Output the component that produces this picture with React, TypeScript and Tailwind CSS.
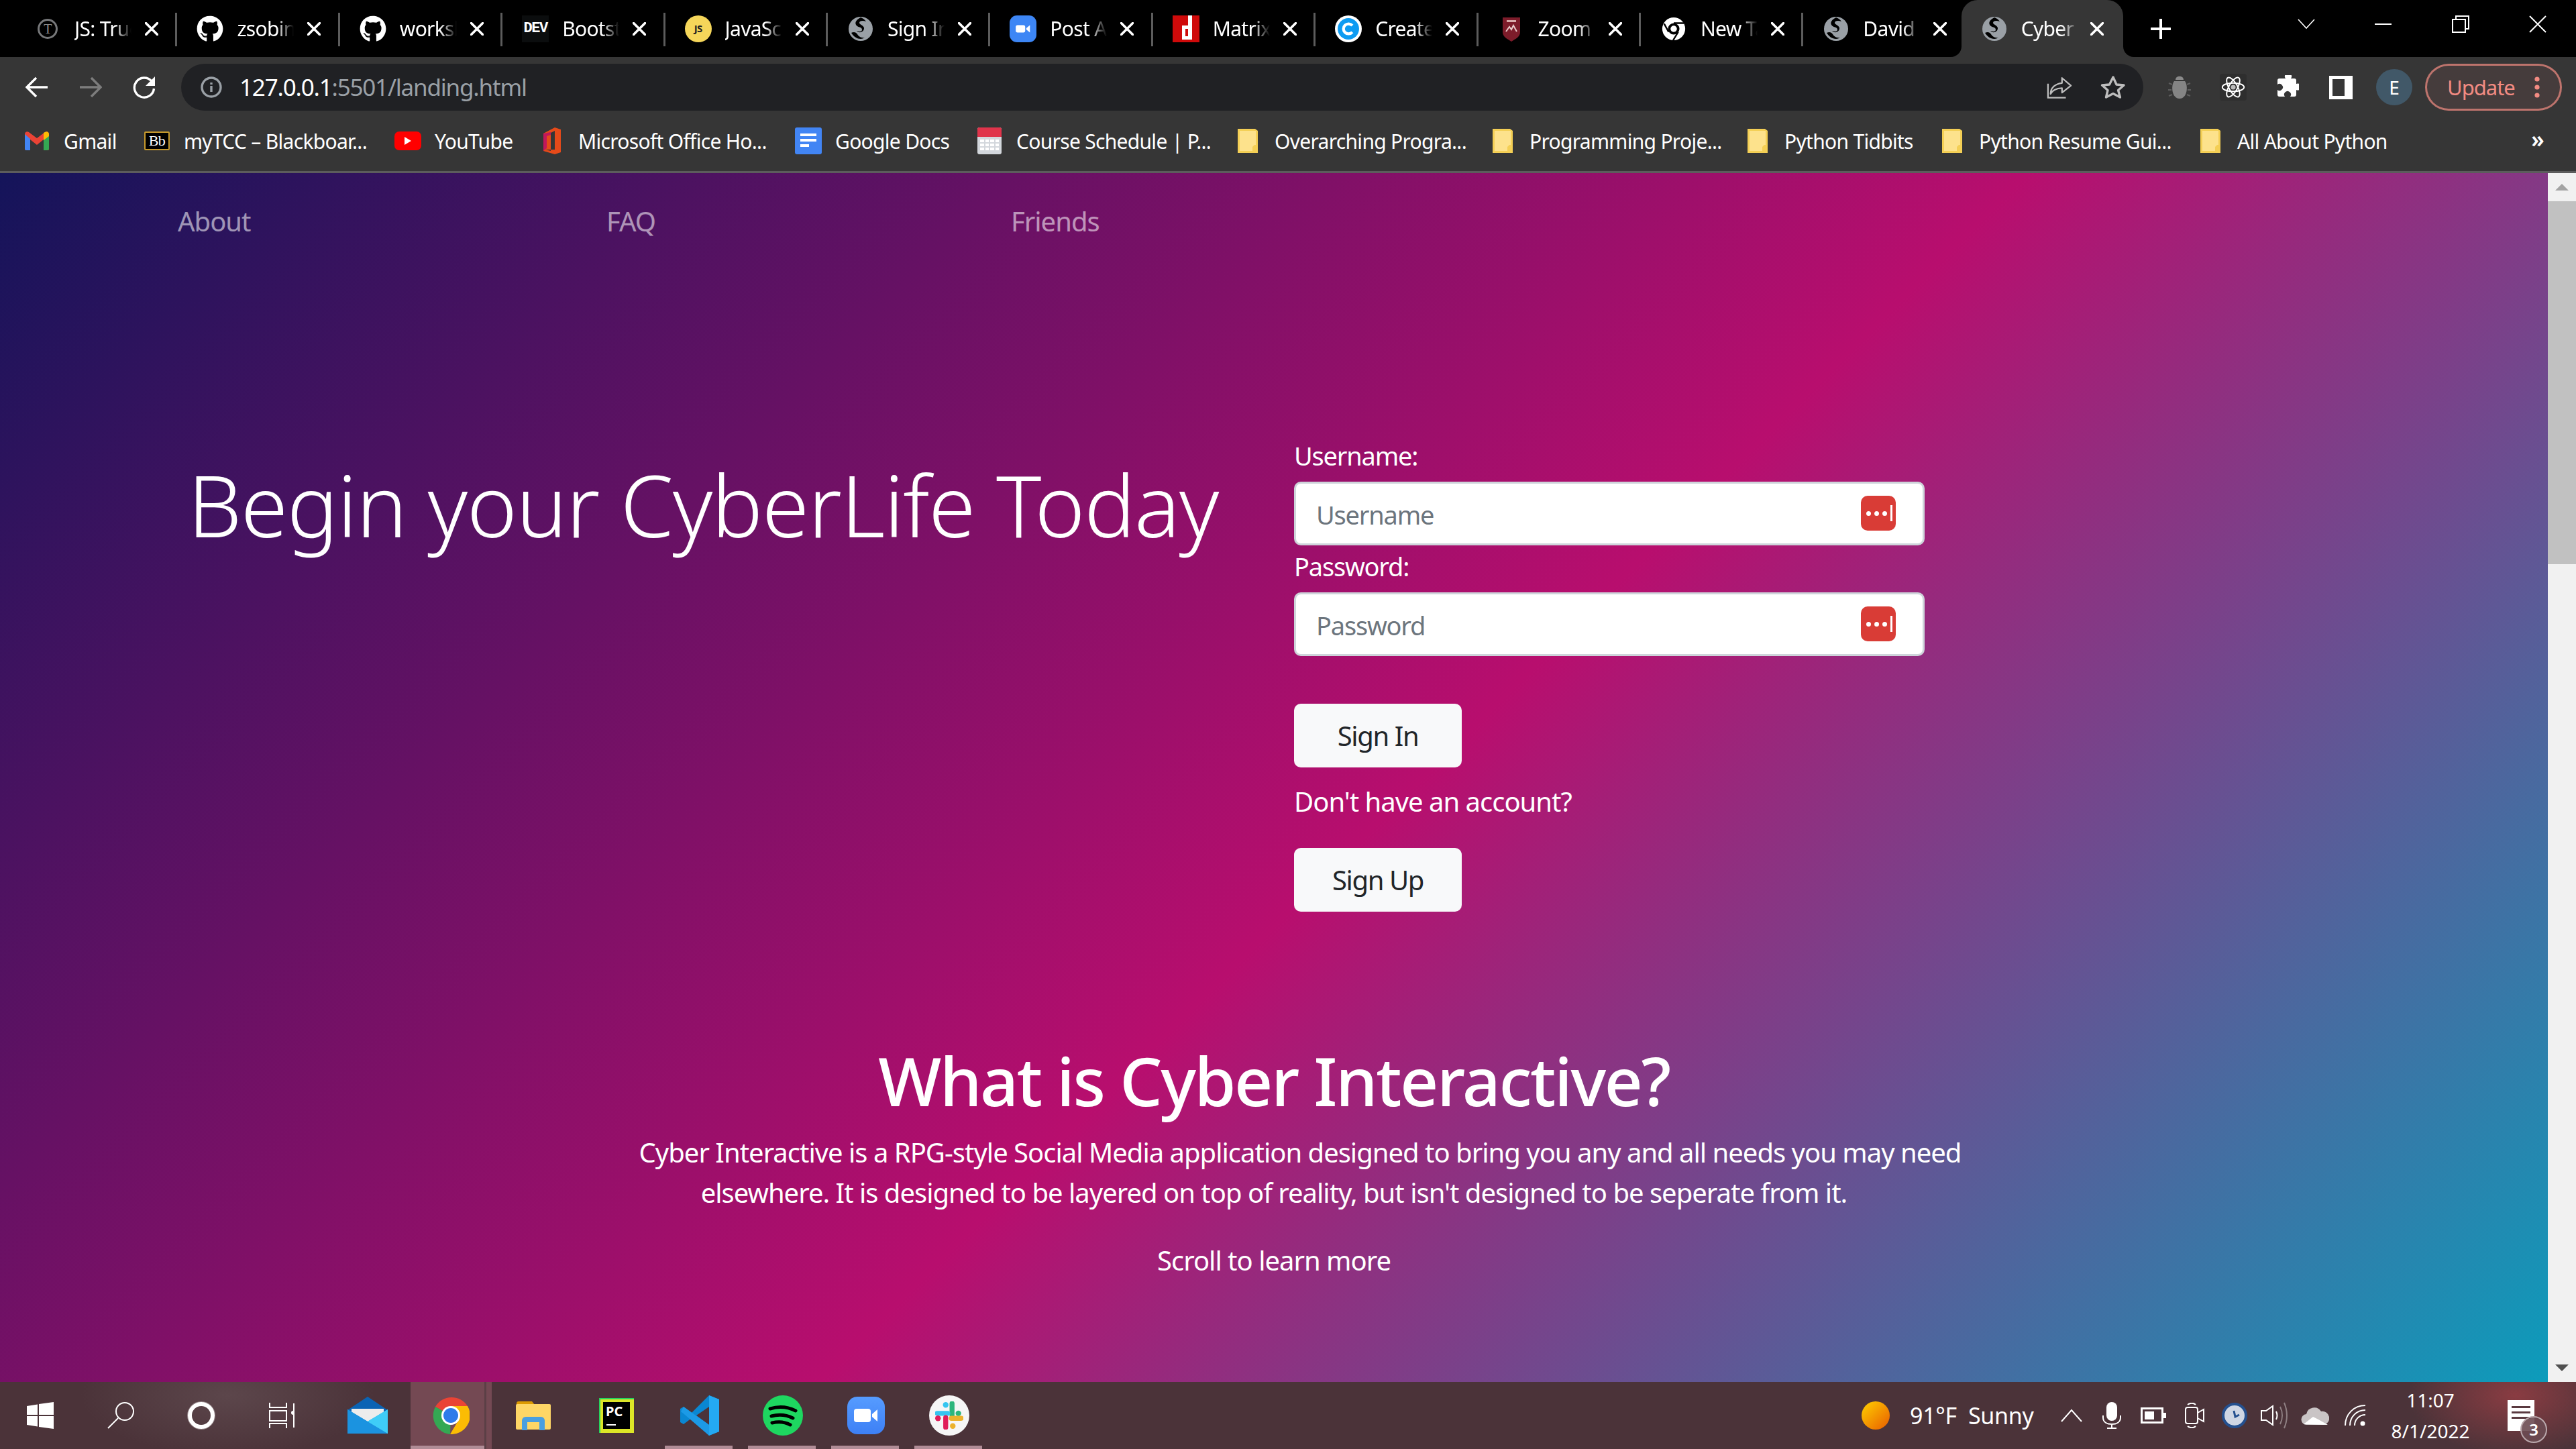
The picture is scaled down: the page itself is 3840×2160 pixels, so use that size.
import React from 'react';
import { FaGithub } from 'react-icons/fa';

function Globe() {
    return (
        <svg viewBox="0 0 40 40" className="w-[40px] h-[40px]">
            <circle cx="20" cy="20" r="18" fill="#9aa0a6" />
            <path d="M20 3c-6 3-9 7-7 11s9 3 9 7-5 3-8 2c4 4 10 2 11-3s-7-6-7-9 5-4 10-2C26 6 23 4 20 3z" fill="#000" />
            <path d="M6 26c3 5 8 9 14 9 2 0 4-1 6-2-6 1-9-2-11-5s-5-4-9-2z" fill="#000" />
        </svg>
    );
}

function MiniChrome() {
    return (
        <svg viewBox="0 0 40 40" className="w-[38px] h-[38px]">
            <circle cx="20" cy="20" r="18" fill="#fff" />
            <circle cx="20" cy="20" r="9" fill="#000" />
            <circle cx="20" cy="20" r="5" fill="#fff" />
            <path d="M20 11h16M12 25L5 12M27 25l-8 13" stroke="#000" strokeWidth="2.5" />
        </svg>
    );
}

const tabs: { title: string; icon: React.ReactNode }[] = [
    {
        title: 'JS: True',
        icon: (
            <div className="w-[30px] h-[30px] rounded-full border-[3px] border-[#77787a] flex items-center justify-center text-[#8a8a8a] text-[20px] leading-none [font-family:'Liberation_Serif',serif]">
                T
            </div>
        ),
    },
    { title: 'zsobin', icon: <FaGithub className="w-[40px] h-[40px] text-white" /> },
    { title: 'worksh', icon: <FaGithub className="w-[40px] h-[40px] text-white" /> },
    {
        title: 'Bootst',
        icon: (
            <div className="w-[40px] h-[40px] bg-[#0b0d0e] flex items-center justify-center text-white text-[22px] font-bold leading-none [font-family:'Liberation_Mono',monospace] tracking-[-1.5px]">
                DEV
            </div>
        ),
    },
    {
        title: 'JavaScr',
        icon: (
            <div className="w-[40px] h-[40px] rounded-full bg-[#f5d65a] flex items-center justify-center text-[#222] text-[15px] font-bold leading-none">
                JS
            </div>
        ),
    },
    { title: 'Sign In', icon: <Globe /> },
    {
        title: 'Post A',
        icon: (
            <div className="w-[40px] h-[40px] rounded-[11px] bg-[#3d86f5] flex items-center justify-center">
                <svg viewBox="0 0 24 24" className="w-[26px] h-[26px]">
                    <rect x="2" y="7" width="13" height="10" rx="2.5" fill="#fff" />
                    <path d="M16.5 11l5-4v10l-5-4z" fill="#fff" />
                </svg>
            </div>
        ),
    },
    {
        title: 'Matrix',
        icon: (
            <div className="w-[40px] h-[40px] bg-[#cf0a0a]">
                <svg viewBox="0 0 40 40" className="w-full h-full">
                    <path d="M23 0h6v36h-15V15h9zM19 20v11h4V20z" fill="#fff" />
                </svg>
            </div>
        ),
    },
    {
        title: 'Create',
        icon: (
            <div className="w-[40px] h-[40px] rounded-full bg-white flex items-center justify-center">
                <svg viewBox="0 0 32 32" className="w-[34px] h-[34px]">
                    <circle cx="16" cy="16" r="15" fill="#0d9bf2" />
                    <path d="M21.5 11.5a7 7 0 1 0 0 9" fill="none" stroke="#fff" strokeWidth="4" />
                </svg>
            </div>
        ),
    },
    {
        title: 'Zoom',
        icon: (
            <svg viewBox="0 0 32 40" className="w-[32px] h-[40px]">
                <path d="M3 3h26v22c0 7-7 10-13 14C10 35 3 32 3 25z" fill="#7d1c2a" />
                <path d="M8 24l5-7 3 4 3-6 5 9" fill="none" stroke="#e8c9c9" strokeWidth="2" />
                <rect x="9" y="7" width="14" height="3" fill="#d8a9a9" />
            </svg>
        ),
    },
    { title: 'New Tab', icon: <MiniChrome /> },
    { title: 'David', icon: <Globe /> },
];

function CloseX({ className = 'text-white' }: { className?: string }) {
    return (
        <svg viewBox="0 0 20 20" className={`w-[20px] h-[20px] shrink-0 ${className}`}>
            <path d="M1.5 1.5l17 17M18.5 1.5l-17 17" stroke="currentColor" strokeWidth="3.6" strokeLinecap="round" />
        </svg>
    );
}

function TabBar() {
    return (
        <div className="h-[85px] bg-black flex pl-[22px] shrink-0 text-[30px] tracking-[-0.7px] text-white">
            {tabs.map((tab) => (
                <div key={tab.title} className="w-[242.4px] h-[85px] flex items-center relative shrink-0">
                    <div className="w-[40px] h-[40px] ml-[29px] flex items-center justify-center shrink-0">{tab.icon}</div>
                    <div className="ml-[20px] w-[85px] overflow-hidden whitespace-nowrap [mask-image:linear-gradient(to_right,#000_70%,transparent)]">
                        {tab.title}
                    </div>
                    <div className="ml-[20px]">
                        <CloseX />
                    </div>
                    <div className="absolute right-0 top-[19px] h-[50px] w-[3px] bg-[#5c5c5c]" />
                </div>
            ))}
            <div className="w-[241px] h-[85px] -ml-[7px] flex items-center relative shrink-0 bg-[#363636] rounded-t-[24px]">
                <div className="w-[40px] h-[40px] ml-[29px] flex items-center justify-center shrink-0">
                    <Globe />
                </div>
                <div className="ml-[20px] w-[85px] overflow-hidden whitespace-nowrap [mask-image:linear-gradient(to_right,#000_70%,transparent)]">
                    Cyber In
                </div>
                <div className="ml-[18px]">
                    <CloseX />
                </div>
                <div className="absolute -left-[16px] bottom-0 w-[16px] h-[16px] bg-[#363636]">
                    <div className="w-full h-full bg-black rounded-br-[16px]" />
                </div>
                <div className="absolute -right-[16px] bottom-0 w-[16px] h-[16px] bg-[#363636]">
                    <div className="w-full h-full bg-black rounded-bl-[16px]" />
                </div>
            </div>
            <div className="ml-[41px] h-[85px] flex items-center">
                <svg viewBox="0 0 30 30" className="w-[30px] h-[30px]">
                    <path d="M15 1v28M1 15h28" stroke="#fff" strokeWidth="4" strokeLinecap="round" />
                </svg>
            </div>
            <div className="ml-auto flex items-start">
                <div className="w-[115px] h-[72px] flex items-center justify-center">
                    <svg viewBox="0 0 26 16" className="w-[26px] h-[16px]">
                        <path d="M1 1l12 13L25 1" fill="none" stroke="#fff" strokeWidth="1.6" />
                    </svg>
                </div>
                <div className="w-[115px] h-[72px] flex items-center justify-center">
                    <div className="w-[25px] h-[2px] bg-white" />
                </div>
                <div className="w-[115px] h-[72px] flex items-center justify-center">
                    <svg viewBox="0 0 26 26" className="w-[26px] h-[26px]">
                        <rect x="1" y="6" width="19" height="19" fill="none" stroke="#fff" strokeWidth="2" />
                        <path d="M6 5V1h19v19h-4" fill="none" stroke="#fff" strokeWidth="2" />
                    </svg>
                </div>
                <div className="w-[115px] h-[72px] flex items-center justify-center">
                    <svg viewBox="0 0 26 26" className="w-[26px] h-[26px]">
                        <path d="M1 1l24 24M25 1L1 25" stroke="#fff" strokeWidth="2" />
                    </svg>
                </div>
            </div>
        </div>
    );
}

function NavButton({ children }: { children: React.ReactNode }) {
    return <div className="w-[80px] h-[80px] flex items-center justify-center shrink-0">{children}</div>;
}

function Toolbar() {
    return (
        <div className="h-[85px] bg-[#363636] flex items-center pl-[15px] pt-[5px] shrink-0">
            <NavButton>
                <svg viewBox="0 0 34 32" className="w-[34px] h-[32px]">
                    <path d="M33 16H3M16 2L2 16l14 14" fill="none" stroke="#fff" strokeWidth="3.4" />
                </svg>
            </NavButton>
            <NavButton>
                <svg viewBox="0 0 34 32" className="w-[34px] h-[32px]">
                    <path d="M1 16h30M18 2l14 14-14 14" fill="none" stroke="#7d7d7d" strokeWidth="3.4" />
                </svg>
            </NavButton>
            <NavButton>
                <svg viewBox="0 0 34 34" className="w-[34px] h-[34px]">
                    <path d="M28 8a14.6 14.6 0 1 0 3.5 11" fill="none" stroke="#fff" strokeWidth="3.4" />
                    <path d="M33 1v14H19z" fill="#fff" />
                </svg>
            </NavButton>
            <div className="ml-[15px] w-[2925px] h-[70px] rounded-full bg-[#202124] flex items-center text-[35px] tracking-[-1.2px] shrink-0">
                <svg viewBox="0 0 32 32" className="w-[32px] h-[32px] ml-[29px]">
                    <circle cx="16" cy="16" r="14" fill="none" stroke="#9aa0a6" strokeWidth="3.4" />
                    <path d="M16 14v9M16 9v3" stroke="#9aa0a6" strokeWidth="3.4" />
                </svg>
                <div className="ml-[26px] text-white">
                    127.0.0.1<span className="text-[#9aa0a6]">:5501/landing.html</span>
                </div>
                <div className="ml-auto flex items-center mr-[5px]">
                    <div className="w-[80px] flex justify-center">
                        <svg viewBox="0 0 40 36" className="w-[38px] h-[35px]">
                            <path d="M24 3l14 12-14 11v-7C15 19 8 23 6 28c0-10 8-16 18-17z" fill="none" stroke="#bdbdbd" strokeWidth="2.4" strokeLinejoin="round" />
                            <path d="M2 12v22h28" fill="none" stroke="#bdbdbd" strokeWidth="2.4" />
                        </svg>
                    </div>
                    <div className="w-[80px] flex justify-center">
                        <svg viewBox="0 0 38 36" className="w-[38px] h-[36px]">
                            <path d="M19 3l5 11 11 1-8.500 7.500L29.500 33 19 27.500 8.500 33l2.500-10.500L2.500 15l11-1z" fill="none" stroke="#bdbdbd" strokeWidth="3.4" strokeLinejoin="round" />
                        </svg>
                    </div>
                </div>
            </div>
            <div className="ml-[14px] flex items-center">
                <NavButton>
                    <svg viewBox="0 0 34 36" className="w-[34px] h-[36px]">
                        <path d="M11 7c0-7 12-7 12 0z" fill="#8a8a8a" />
                        <path d="M9 9h16c5 6 4 26-8 26S4 15 9 9z" fill="#848484" />
                        <path d="M1 12l5 2M0 22h5M1 31l5-2M33 12l-5 2M34 22h-5M33 31l-5-2" stroke="#5e5e5e" strokeWidth="2" />
                    </svg>
                </NavButton>
                <NavButton>
                    <div className="w-[40px] h-[40px] bg-[#2e2e2e] rounded-[4px] flex items-center justify-center">
                        <svg viewBox="-20 -20 40 40" className="w-[36px] h-[36px]">
                            <g fill="none" stroke="#fff" strokeWidth="2.200">
                                <ellipse rx="18" ry="7" />
                                <ellipse rx="18" ry="7" transform="rotate(60)" />
                                <ellipse rx="18" ry="7" transform="rotate(120)" />
                            </g>
                            <circle r="4" fill="#bbb" />
                        </svg>
                    </div>
                </NavButton>
                <NavButton>
                    <svg viewBox="0 0 36 36" className="w-[36px] h-[36px]">
                        <path d="M12 6h4a5 5 0 1 1 8 0h5c2 0 3 1 3 3v5a5 5 0 1 1 0 9v7c0 2-1 3-3 3h-6a5 5 0 1 0-8 0H7c-2 0-3-1-3-3v-7a5 5 0 1 0 0-8V9c0-2 1-3 3-3z" fill="#fff" transform="translate(0 -1)" />
                    </svg>
                </NavButton>
                <NavButton>
                    <div className="w-[35px] h-[35px] border-[5px] border-white border-r-[12px] bg-[#363636]" />
                </NavButton>
                <NavButton>
                    <div className="w-[54px] h-[54px] rounded-full bg-[#415868] flex items-center justify-center text-white text-[28px]">E</div>
                </NavButton>
                <div className="ml-[6px] w-[204px] h-[70px] rounded-full border-[3px] border-[#f28b82]/70 bg-[#453c3c] flex items-center text-[#f28b82] text-[31px] tracking-[-1px] pl-[30px]">
                    Update
                    <svg viewBox="0 0 8 32" className="w-[8px] h-[32px] ml-auto mr-[30px]">
                        <circle cx="4" cy="4" r="3.600" fill="#f28b82" />
                        <circle cx="4" cy="16" r="3.600" fill="#f28b82" />
                        <circle cx="4" cy="28" r="3.600" fill="#f28b82" />
                    </svg>
                </div>
            </div>
        </div>
    );
}

function Folder() {
    return (
        <svg viewBox="0 0 30 36" className="w-[30px] h-[36px]">
            <path d="M0 0h26l4 3v33H0z" fill="#f4cf55" />
            <path d="M3 3h24v30H3z" fill="#fde28c" />
            <path d="M22 33v-6l3-3h2v9z" fill="#f4cf55" />
        </svg>
    );
}

const bookmarks: { label: string; width: string; icon: React.ReactNode }[] = [
    {
        label: 'Gmail',
        width: 'w-[179px]',
        icon: (
            <svg viewBox="0 0 36 28" className="w-[36px] h-[28px]">
                <path d="M0 4c0-3 3-5 6-3l12 9 12-9c3-2 6 0 6 3v22c0 1-1 2-2 2h-6V12L18 20 8 12v16H2c-1 0-2-1-2-2z" fill="#ea4335" />
                <path d="M0 4v22c0 1 1 2 2 2h6V11z" fill="#4285f4" />
                <path d="M36 4v22c0 1-1 2-2 2h-6V11z" fill="#34a853" />
                <path d="M28 2l2-1c3-2 6 0 6 3v3l-8 6z" fill="#fbbc04" />
            </svg>
        ),
    },
    {
        label: 'myTCC – Blackboar...',
        width: 'w-[374px]',
        icon: (
            <div className="w-[38px] h-[28px] bg-black border-2 border-[#c79a2d] rounded-[2px] flex items-center justify-center text-white text-[22px] leading-none [font-family:'Liberation_Serif',serif]">
                Bb
            </div>
        ),
    },
    {
        label: 'YouTube',
        width: 'w-[214px]',
        icon: (
            <div className="w-[40px] h-[28px] bg-[#ff0000] rounded-[7px] flex items-center justify-center">
                <svg viewBox="0 0 10 12" className="w-[10px] h-[12px]">
                    <path d="M0 0l10 6-10 6z" fill="#fff" />
                </svg>
            </div>
        ),
    },
    {
        label: 'Microsoft Office Ho...',
        width: 'w-[383px]',
        icon: (
            <svg viewBox="0 0 30 40" className="w-[30px] h-[40px]">
                <path d="M20 0l9 3v34l-9 3-17-5V9z" fill="#e64a19" />
                <path d="M20 5v28H6l8 2V8z" fill="#363636" />
                <path d="M3 9l11-2v4l-6 2v18l-5 4z" fill="#c2185b" />
            </svg>
        ),
    },
    {
        label: 'Google Docs',
        width: 'w-[270px]',
        icon: (
            <div className="w-[40px] h-[40px] flex items-center justify-center">
                <div className="w-[40px] h-[40px] bg-[#4285f4] rounded-[3px] flex flex-col gap-[4px] px-[8px] pt-[9px]">
                    <div className="h-[4px] bg-white" />
                    <div className="h-[4px] bg-white" />
                    <div className="h-[4px] w-[13px] bg-white" />
                </div>
            </div>
        ),
    },
    {
        label: 'Course Schedule | P...',
        width: 'w-[385px]',
        icon: (
            <div className="w-[40px] h-[40px] flex items-center justify-center">
                <div className="w-[36px] h-[40px] bg-[#d3d7dc] rounded-[3px] overflow-hidden">
                    <div className="h-[14px] bg-[#e0344b]" />
                    <div className="grid grid-cols-4 gap-[2px] p-[4px]">
                        {Array.from({ length: 12 }).map((_, i) => (
                            <div key={i} className="h-[4px] bg-white" />
                        ))}
                    </div>
                </div>
            </div>
        ),
    },
    { label: 'Overarching Progra...', width: 'w-[380px]', icon: <Folder /> },
    { label: 'Programming Proje...', width: 'w-[380px]', icon: <Folder /> },
    { label: 'Python Tidbits', width: 'w-[290px]', icon: <Folder /> },
    { label: 'Python Resume Gui...', width: 'w-[385px]', icon: <Folder /> },
    { label: 'All About Python', width: 'w-[440px]', icon: <Folder /> },
];

function BookmarkBar() {
    return (
        <div className="h-[85px] bg-[#363636] flex items-center pl-[35px] pb-[5px] text-[30px] tracking-[-0.7px] text-white shrink-0 relative">
            {bookmarks.map((b) => (
                <div key={b.label} className={`flex items-center shrink-0 whitespace-nowrap ${b.width}`}>
                    <div className="w-[40px] flex justify-center shrink-0">{b.icon}</div>
                    <div className="ml-[20px]">{b.label}</div>
                </div>
            ))}
            <div className="ml-auto mr-[48px] text-[34px] font-semibold leading-none pb-[6px]">»</div>
        </div>
    );
}

function PasswordBadge() {
    return (
        <div className="absolute right-[43px] top-[21px] w-[52px] h-[52px] rounded-[10px] bg-[#d93c36] flex items-center justify-center gap-[5px] pl-[2px]">
            <div className="w-[7px] h-[7px] rounded-full bg-white" />
            <div className="w-[7px] h-[7px] rounded-full bg-white" />
            <div className="w-[7px] h-[7px] rounded-full bg-white" />
            <div className="w-[3px] h-[24px] bg-white" />
        </div>
    );
}

function Field({ label, placeholder, type }: { label: string; placeholder: string; type: string }) {
    return (
        <div>
            <label className="block h-[60px] text-[38px] tracking-[-1.2px] leading-[57px] text-white">{label}</label>
            <div className="relative mt-[7px] w-[940px]">
                <input
                    type={type}
                    placeholder={placeholder}
                    className="block w-full h-[95px] rounded-[10px] bg-white border-[3px] border-[#ced4da] pl-[30px] pt-[3px] text-[38px] tracking-[-1.2px] text-[#212529] placeholder:text-[#6c757d] outline-none"
                />
                <PasswordBadge />
            </div>
        </div>
    );
}

function LandingPage() {
    return (
        <div className="flex-1 h-full overflow-hidden bg-[linear-gradient(135deg,#14145a_0%,#b80e6e_54%,#0c9cbb_100%)] text-white text-[40px] tracking-[-1px]">
            <nav className="flex pl-[265px] pt-[47px] h-[97px] leading-[50px] text-white/55">
                <a className="w-[639px]">About</a>
                <a className="w-[603px]">FAQ</a>
                <a>Friends</a>
            </nav>
            <div className="flex mt-[296px]">
                <div className="w-[1929px] pl-[280px] shrink-0">
                    <h1 className="mt-[16px] text-[127px] tracking-[-1.2px] leading-[170px] font-light whitespace-nowrap">Begin your CyberLife Today</h1>
                </div>
                <form>
                    <Field label="Username:" placeholder="Username" type="text" />
                    <div className="mt-[3px]">
                        <Field label="Password:" placeholder="Password" type="password" />
                    </div>
                    <button type="button" className="block mt-[71px] w-[250px] h-[95px] rounded-[10px] bg-[#f8f9fa] text-[#212529] text-[40px] tracking-[-1.4px]">
                        Sign In
                    </button>
                    <p className="mt-[21px] h-[60px] leading-[60px]">Don't have an account?</p>
                    <button type="button" className="block mt-[39px] w-[250px] h-[95px] rounded-[10px] bg-[#f8f9fa] text-[#212529] text-[40px] tracking-[-1.4px]">
                        Sign Up
                    </button>
                </form>
            </div>
            <section className="mt-[191px] flex flex-col items-center leading-[60px] text-center">
                <h2 className="text-[100px] tracking-[-2.5px] leading-[120px] font-medium whitespace-nowrap">What is Cyber Interactive?</h2>
                <p className="mt-[18px] ml-[78px] whitespace-nowrap">Cyber Interactive is a RPG-style Social Media application designed to bring you any and all needs you may need</p>
                <p className="whitespace-nowrap">elsewhere. It is designed to be layered on top of reality, but isn't designed to be seperate from it.</p>
                <p className="mt-[41px]">Scroll to learn more</p>
            </section>
        </div>
    );
}

function Scrollbar() {
    return (
        <div className="w-[42px] h-full bg-[#f1f1f1] flex flex-col items-center shrink-0">
            <div className="h-[42px] flex items-center justify-center">
                <div className="w-0 h-0 border-x-[10px] border-x-transparent border-b-[10px] border-b-[#a3a3a3]" />
            </div>
            <div className="w-full h-[541px] bg-[#c1c1c1]" />
            <div className="flex-1" />
            <div className="h-[42px] flex items-center justify-center">
                <div className="w-0 h-0 border-x-[10px] border-x-transparent border-t-[10px] border-t-[#505050]" />
            </div>
        </div>
    );
}

function TaskButton({ children, width = 'w-[124px]', active = false, open = false }: { children: React.ReactNode; width?: string; active?: boolean; open?: boolean }) {
    return (
        <div className={`h-[100px] flex items-center justify-center relative shrink-0 ${width} ${active ? 'bg-[#744953]' : ''}`}>
            {children}
            {open && <div className="absolute left-[10px] right-[13px] bottom-0 h-[5px] bg-[#b08c96]" />}
            {active && <div className="absolute inset-x-0 bottom-0 h-[5px] bg-[#b08c96]" />}
        </div>
    );
}

function TrayIcon({ children, width = 'w-[62px]' }: { children: React.ReactNode; width?: string }) {
    return <div className={`h-[100px] flex items-center justify-center shrink-0 ${width}`}>{children}</div>;
}

function Taskbar() {
    return (
        <div className="h-[100px] shrink-0 flex items-center text-white bg-[#4b3339] bg-[radial-gradient(ellipse_160px_90px_at_3750px_20px,#8a3c42,transparent),radial-gradient(ellipse_220px_90px_at_340px_20px,#5c464b,transparent)]">
            <TaskButton width="w-[120px]">
                <svg viewBox="0 0 40 40" className="w-[40px] h-[40px]">
                    <path d="M0 6l16-2.500V19H0zM18 3L40 0v19H18zM0 21h16v15.500L0 34zM18 21h22v19l-22-3z" fill="#fff" />
                </svg>
            </TaskButton>
            <TaskButton width="w-[120px]">
                <svg viewBox="0 0 40 40" className="w-[40px] h-[40px]">
                    <circle cx="26" cy="14" r="13" fill="none" stroke="#fff" strokeWidth="2" />
                    <path d="M16 24L1 39" stroke="#fff" strokeWidth="2" />
                </svg>
            </TaskButton>
            <TaskButton width="w-[120px]">
                <div className="w-[40px] h-[40px] rounded-full border-[6px] border-white shadow-[0_0_0_1px_#9a8a8d]" />
            </TaskButton>
            <TaskButton width="w-[128px] pr-[8px]">
                <svg viewBox="0 0 38 38" className="w-[38px] h-[38px]">
                    <path d="M1 0v7h25V0M1 38v-7h25v7M1 12h25v15H1z" fill="none" stroke="#fff" strokeWidth="2" />
                    <path d="M37 1v36" stroke="#fff" strokeWidth="2" />
                    <circle cx="37" cy="15" r="3" fill="#fff" transform="translate(-1 0)" />
                </svg>
            </TaskButton>
            <TaskButton width="w-[124px] pr-[4px]">
                <svg viewBox="0 0 60 56" className="w-[60px] h-[56px]">
                    <path d="M0 20L30 0l30 20v8H0z" fill="#0a63b4" />
                    <path d="M6 18h48v20H6z" fill="#ececec" />
                    <path d="M0 19l30 18 30-18v36H0z" fill="#2aa9ec" />
                    <path d="M0 55V19l30 18 30 18z" fill="#1b93e0" />
                    <path d="M60 19v36L30 37z" fill="#3fcdf7" />
                </svg>
            </TaskButton>
            <TaskButton width="w-[110px] pl-[10px]" active>
                <svg viewBox="0 0 56 56" className="w-[56px] h-[56px]">
                    <path d="M28 28L5 15A28 28 0 0 1 53 14H28z" fill="#ea4335" />
                    <path d="M28 28L5 15a28 28 0 0 0 22 41z" fill="#34a853" />
                    <path d="M28 14h25a28 28 0 0 1-26 42l13-22z" fill="#fbbc04" />
                    <circle cx="28" cy="28" r="14" fill="#fff" />
                    <circle cx="28" cy="28" r="11" fill="#2f7bea" />
                </svg>
            </TaskButton>
            <div className="w-[3px] h-[100px] bg-[#5b3f46] shrink-0" />
            <div className="w-[8px] h-[100px] bg-[#744953] shrink-0" />
            <TaskButton width="w-[124px]">
                <svg viewBox="0 0 52 44" className="w-[52px] h-[44px]">
                    <path d="M1 4c0-2 1-3 3-3h20l4 5v8H1z" fill="#dc9a00" />
                    <rect x="0" y="5" width="52" height="38" rx="2" fill="#fed666" />
                    <path d="M9 44V30c0-3 2-6 6-6h22c4 0 6 3 6 6v14h-8V32H17v12z" fill="#4a9fe0" />
                </svg>
            </TaskButton>
            <TaskButton>
                <div className="w-[52px] h-[52px] bg-[#dde627] shadow-[inset_2px_2px_0_#26d35e] p-[6px]">
                    <div className="w-full h-full bg-black relative text-white text-[20px] font-bold leading-none pl-[4px] pt-[4px]">
                        PC
                        <div className="absolute left-[5px] bottom-[5px] w-[14px] h-[2px] bg-white" />
                    </div>
                </div>
            </TaskButton>
            <TaskButton open>
                <svg viewBox="0 0 60 60" className="w-[60px] h-[60px]">
                    <path d="M44 0L18 26 6 17 1 20v20l5 3 12-9 26 26 15-6V6z" fill="#0a87d2" />
                    <path d="M44 0l15 6v48l-15 6z" fill="#24a9f2" />
                    <path d="M44 17L25 30l19 14z" fill="#4b3339" />
                    <path d="M6 17l38 27v16L2 24z" fill="#1c9ae6" />
                </svg>
            </TaskButton>
            <TaskButton open>
                <svg viewBox="0 0 60 60" className="w-[60px] h-[60px]">
                    <circle cx="30" cy="30" r="30" fill="#1ed760" />
                    <path d="M11 20c13-4 26-3 38 3M13 31c11-3 22-2 32 3M14 41c9-2 18-2 27 3" fill="none" stroke="#000" strokeWidth="5" strokeLinecap="round" />
                </svg>
            </TaskButton>
            <TaskButton open>
                <div className="w-[56px] h-[56px] rounded-[15px] bg-[linear-gradient(#569cff,#3d80f5)] flex items-center justify-center">
                    <svg viewBox="0 0 36 20" className="w-[36px] h-[20px]">
                        <rect x="0" y="0" width="25" height="20" rx="4" fill="#fff" />
                        <path d="M27 8l8-7v18l-8-7z" fill="#fff" />
                    </svg>
                </div>
            </TaskButton>
            <TaskButton open>
                <div className="w-[60px] h-[60px] rounded-full bg-[#f6f6f6] flex items-center justify-center">
                    <svg viewBox="0 0 40 40" className="w-[42px] h-[42px]">
                        <path d="M24 3v17" stroke="#2eb67d" strokeWidth="7" strokeLinecap="round" />
                        <path d="M33 17h0" stroke="#2eb67d" strokeWidth="8" strokeLinecap="round" />
                        <path d="M3 17h15" stroke="#36c5f0" strokeWidth="7" strokeLinecap="round" />
                        <path d="M15 5h0" stroke="#36c5f0" strokeWidth="8" strokeLinecap="round" />
                        <path d="M15 23v14" stroke="#e01e5a" strokeWidth="7" strokeLinecap="round" />
                        <path d="M4 24h0" stroke="#e01e5a" strokeWidth="8" strokeLinecap="round" />
                        <path d="M23 24h14" stroke="#ecb22e" strokeWidth="7" strokeLinecap="round" />
                        <path d="M25 35h0" stroke="#ecb22e" strokeWidth="8" strokeLinecap="round" />
                    </svg>
                </div>
            </TaskButton>

            <div className="ml-auto flex items-center">
                <svg viewBox="0 0 44 44" className="w-[44px] h-[44px]">
                    <defs>
                        <linearGradient id="sun" x1="0" y1="0" x2="1" y2="1">
                            <stop offset="0" stopColor="#ffd200" />
                            <stop offset="1" stopColor="#e85c00" />
                        </linearGradient>
                    </defs>
                    <circle cx="22" cy="22" r="21" fill="url(#sun)" />
                </svg>
                <div className="ml-[29px] w-[212px] text-[34px] tracking-[-0.3px] whitespace-pre">91°F  Sunny</div>
                <TrayIcon width="w-[58px]">
                    <svg viewBox="0 0 32 20" className="w-[32px] h-[20px]">
                        <path d="M1 19L16 2l15 17" fill="none" stroke="#fff" strokeWidth="2" />
                    </svg>
                </TrayIcon>
                <TrayIcon>
                    <svg viewBox="0 0 28 40" className="w-[28px] h-[40px]">
                        <rect x="6" y="0" width="16" height="28" rx="8" fill="#fff" />
                        <path d="M1 20v3c0 7 6 10 13 10s13-3 13-10v-3M14 33v6M7 39h14" fill="none" stroke="#fff" strokeWidth="2" />
                    </svg>
                </TrayIcon>
                <TrayIcon>
                    <svg viewBox="0 0 38 24" className="w-[38px] h-[24px]">
                        <rect x="1.500" y="1.500" width="31" height="21" fill="none" stroke="#fff" strokeWidth="3" />
                        <rect x="6" y="6" width="14" height="12" fill="#fff" />
                        <rect x="34" y="8" width="4" height="8" fill="#fff" />
                    </svg>
                </TrayIcon>
                <TrayIcon>
                    <svg viewBox="0 0 30 38" className="w-[30px] h-[38px]">
                        <rect x="1" y="7" width="18" height="24" rx="3" fill="none" stroke="#fff" strokeWidth="2" />
                        <path d="M19 15l9-5v18l-9-5zM4 3c4-3 9-3 12 0M4 35c4 3 9 3 12 0" fill="none" stroke="#fff" strokeWidth="2" />
                    </svg>
                </TrayIcon>
                <TrayIcon width="w-[56px]">
                    <div className="w-[38px] h-[38px] rounded-full bg-[#ced6e4] border-[4px] border-[#24508f] flex items-center justify-center">
                        <svg viewBox="0 0 20 20" className="w-[20px] h-[20px]">
                            <path d="M9 3l2 9 6-3" fill="none" stroke="#24508f" strokeWidth="3" />
                        </svg>
                    </div>
                </TrayIcon>
                <TrayIcon width="w-[62px]">
                    <svg viewBox="0 0 40 40" className="w-[40px] h-[40px]">
                        <path d="M1 13h7l10-7v28l-10-7H1z" fill="none" stroke="#fff" strokeWidth="2" />
                        <path d="M23 14c2 4 2 8 0 12" fill="none" stroke="#fff" strokeWidth="2" />
                        <path d="M29 7c4 8 4 18 0 26M35 1c5 12 5 26 0 38" fill="none" stroke="#8e7f82" strokeWidth="2" />
                    </svg>
                </TrayIcon>
                <TrayIcon width="w-[60px]">
                    <svg viewBox="0 0 42 28" className="w-[42px] h-[28px]">
                        <path d="M9 28a8 8 0 0 1-1-16 12 12 0 0 1 22-4 10 10 0 0 1 4 20z" fill="#c9c4c5" />
                        <path d="M4 27l14-11 8 4 14 8z" fill="#fff" />
                    </svg>
                </TrayIcon>
                <TrayIcon width="w-[60px]">
                    <svg viewBox="0 0 32 32" className="w-[32px] h-[32px]">
                        <path d="M1 31C1 14 14 1 31 1M8 31c0-13 10-23 23-23M15 31c0-9 7-16 16-16" fill="none" stroke="#fff" strokeWidth="2" />
                        <circle cx="27" cy="28" r="3.500" fill="#fff" />
                    </svg>
                </TrayIcon>
                <div className="w-[132px] ml-[16px] flex flex-col items-center text-[28px] leading-[46px]">
                    <span>11:07</span>
                    <span>8/1/2022</span>
                </div>
                <div className="w-[100px] ml-[26px] mr-[25px] h-[100px] relative flex items-center">
                    <div className="ml-[23px] w-[40px] h-[46px] bg-white flex flex-col gap-[5px] px-[6px] pt-[9px]">
                        <div className="h-[3px] bg-[#5a3a40]" />
                        <div className="h-[3px] bg-[#5a3a40]" />
                        <div className="h-[3px] bg-[#5a3a40]" />
                    </div>
                    <div className="absolute left-[42px] top-[51px] w-[40px] h-[40px] rounded-full border-2 border-[#b9a7ab] bg-[#6b4b52]/90 flex items-center justify-center text-[24px] font-semibold">
                        3
                    </div>
                </div>
            </div>
        </div>
    );
}

export default function App() {
    return (
        <div className="w-[3840px] h-[2160px] flex flex-col overflow-hidden [font-family:'Noto_Sans',sans-serif]">
            <TabBar />
            <Toolbar />
            <BookmarkBar />
            <div className="h-[3px] bg-[#5c5c5c] shrink-0" />
            <div className="flex h-[1802px] shrink-0">
                <LandingPage />
                <Scrollbar />
            </div>
            <Taskbar />
        </div>
    );
}
